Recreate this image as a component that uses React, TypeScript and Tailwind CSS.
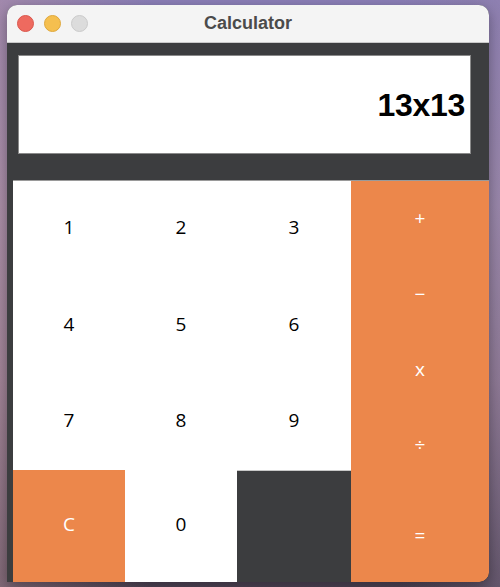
import React from "react";

const digitCls =
  "flex items-center justify-center pb-[3px] bg-white text-black text-[19px] font-['Open_Sans',sans-serif]";
const opCls =
  "flex items-center justify-center bg-[#ec874b] text-white text-[19px] font-['Open_Sans',sans-serif]";

export default function App() {
  return (
    <div className="relative w-[500px] h-[587px] overflow-hidden bg-[linear-gradient(180deg,#8b7fb8_0%,#9a88ad_35%,#8a7590_65%,#4f4456_100%)]">
      <div className="absolute inset-0 bg-[linear-gradient(90deg,rgba(190,150,160,0.45)_0%,rgba(0,0,0,0)_30%,rgba(0,0,0,0)_80%,rgba(150,130,160,0.3)_100%)]" />
      <div className="relative ml-[7px] pt-[5px] w-[482px]">
        <div className="flex flex-col h-[577px] rounded-t-[10px] rounded-br-[10px] overflow-hidden shadow-[0_4px_14px_rgba(0,0,0,0.35)] bg-[#3c3d3f]">
          {/* Title bar */}
          <div className="relative flex items-center h-[38px] bg-[#f4f4f4] border-b border-[#c9c9c9] shrink-0">
            <div className="flex items-center gap-[10px] pl-[10px]">
              <span className="block w-[17px] h-[17px] rounded-full bg-[#ee6a5f] border border-[#d9574d]" />
              <span className="block w-[17px] h-[17px] rounded-full bg-[#f5bf4f] border border-[#dea73c]" />
              <span className="block w-[17px] h-[17px] rounded-full bg-[#dcdcdc] border border-[#cacaca]" />
            </div>
            <div className="absolute inset-0 flex items-center justify-center pointer-events-none">
              <span className="text-[18px] font-bold text-[#4b4b4b] font-['Liberation_Sans',Arial,sans-serif]">
                Calculator
              </span>
            </div>
          </div>
          {/* Body */}
          <div className="flex flex-col flex-1 bg-[#3c3d3f]">
            <div className="ml-[11px] mr-[18px] mt-[12px] h-[99px] bg-white border border-[#8a8a8a] flex items-center justify-end pr-[5px]">
              <span className="text-[32px] font-bold text-black font-['Liberation_Sans',Arial,sans-serif] leading-none tracking-[-0.3px]">
                13x13
              </span>
            </div>
            <div className="mt-[26px] ml-[6px] flex flex-1 border-t border-[#9a9a9a]">
              <div className="grid grid-cols-[112px_112px_114px] grid-rows-[96px_97px_96px_1fr] flex-1">
                <div className={digitCls}>1</div>
                <div className={digitCls}>2</div>
                <div className={digitCls}>3</div>
                <div className={digitCls}>4</div>
                <div className={digitCls}>5</div>
                <div className={digitCls}>6</div>
                <div className={digitCls}>7</div>
                <div className={digitCls}>8</div>
                <div className={digitCls}>9</div>
                <div className={opCls + " pb-[3px]"}>C</div>
                <div className={digitCls}>0</div>
                <div className="bg-[#3c3d3f] border-t border-[#c8c8c8]" />
              </div>
              <div className="w-[138px] grid grid-rows-[76px_76px_76px_76px_1fr] bg-[#ec874b] rounded-br-[10px]">
                <div className={opCls + " pb-[2px]"}>+</div>
                <div className={opCls + " pb-[2px]"}>−</div>
                <div className={opCls + " pb-[4px]"}>x</div>
                <div className={opCls + " pb-[5px]"}>÷</div>
                <div className={opCls + " pt-[4px] rounded-br-[10px]"}>=</div>
              </div>
            </div>
          </div>
        </div>
      </div>
    </div>
  );
}
